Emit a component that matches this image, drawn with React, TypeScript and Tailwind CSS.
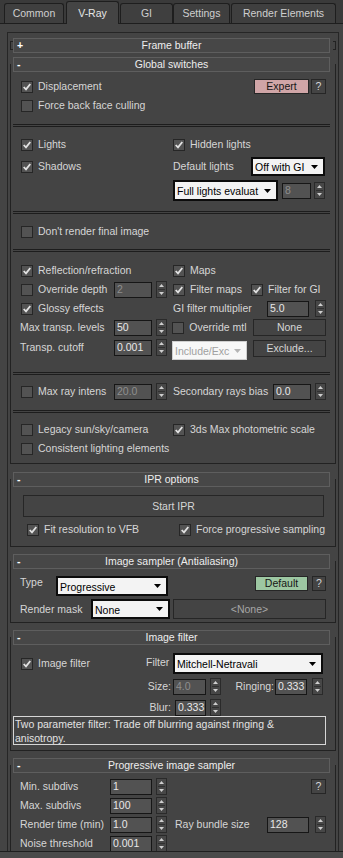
import React from "react";

type Kids = { className?: string; children?: React.ReactNode };

function Check({ on = false, label }: { on?: boolean; label: string }) {
  return (
    <div className="flex items-center whitespace-nowrap">
      <div className="w-[12px] h-[12px] shrink-0 border border-[#262626] bg-[#535353] flex items-center justify-center">
        {on && (
          <svg width="8" height="8" viewBox="0 0 8 8">
            <path d="M0.7 4 L3 6.4 L7.3 1" fill="none" stroke="#e2e2e2" strokeWidth="1.8" />
          </svg>
        )}
      </div>
      <span className="ml-[5px]">{label}</span>
    </div>
  );
}

function Spin({ className = "ml-[4px]" }: { className?: string }) {
  return (
    <div
      className={`w-[11px] h-[17px] shrink-0 border border-[#2a2a2a] bg-[#474747] flex flex-col items-center justify-center gap-[2px] ${className}`}
    >
      <svg width="5" height="3" viewBox="0 0 5 3">
        <path d="M0 3 L2.5 0 L5 3 Z" fill="#cfcfcf" />
      </svg>
      <div className="w-[7px] h-px bg-[#303030]" />
      <svg width="5" height="3" viewBox="0 0 5 3">
        <path d="M0 0 L2.5 3 L5 0 Z" fill="#cfcfcf" />
      </svg>
    </div>
  );
}

function Num({ v, className = "", dim = false }: { v: string; className?: string; dim?: boolean }) {
  return (
    <div
      className={`h-[16px] shrink-0 border border-[#161616] bg-[#525252] pl-[2px] flex items-center overflow-hidden whitespace-nowrap ${
        dim ? "text-[#8e8e8e]" : "text-[#e8e8e8]"
      } ${className}`}
    >
      {v}
    </div>
  );
}

function Drop({ v, className = "", off = false }: { v: string; className?: string; off?: boolean }) {
  return (
    <div
      className={`shrink-0 flex items-center overflow-hidden pl-[2px] pr-[5px] ${
        off ? "border border-[#cfcfcf] bg-[#f7f7f7] text-[#a0a0a0]" : "border-2 border-[#0c0c0c] bg-[#f3f3f3] text-black"
      } ${className}`}
    >
      <span className="flex-1 overflow-hidden whitespace-nowrap pt-[2px]">{v}</span>
      <svg width="7" height="4" viewBox="0 0 7 4" className="shrink-0 ml-[2px]">
        <path d="M0 0 H7 L3.5 4 Z" fill={off ? "#b4b4b4" : "#000"} />
      </svg>
    </div>
  );
}

function Btn({ children, className = "" }: Kids) {
  return (
    <div
      className={`shrink-0 flex items-center justify-center border border-[#262626] whitespace-nowrap ${className}`}
    >
      {children}
    </div>
  );
}

function Header({ title, sign, className = "ml-[2px] mr-[5px]" }: { title: string; sign: string; className?: string }) {
  return (
    <div
      className={`h-[15px] border border-[#5e5e5e] bg-[#474747] grid grid-cols-[20px_1fr_20px] items-center text-[#eeeeee] ${className}`}
    >
      <span className="pl-[3px] font-bold text-white leading-none">{sign}</span>
      <span className="text-center leading-none">{title}</span>
      <span />
    </div>
  );
}

function Rollout({ title, className = "", children }: { title: string; className?: string; children?: React.ReactNode }) {
  return (
    <div className={`flex flex-col border-x border-b border-[#222] ${className}`}>
      <div className="-mt-[7px]">
        <Header sign="-" title={title} />
      </div>
      {children}
    </div>
  );
}

function Sep() {
  return <div className="ml-[2px] mr-[5px] h-[3px] border-y border-[#1d1d1d]" />;
}

function Tab({ children, className = "", active = false }: Kids & { active?: boolean }) {
  return (
    <div
      className={`shrink-0 flex items-center justify-center border-t border-x border-[#1e1e1e] rounded-t-[3px] ${
        active ? "h-[23px] -mb-px bg-[#444444] text-[#e6e6e6]" : "h-[20px] bg-[#3f3f3f] text-[#cfcfcf]"
      } ${className}`}
    >
      {children}
    </div>
  );
}

export default function App() {
  return (
    <div className="w-[343px] h-[858px] overflow-hidden bg-[#444444] flex flex-col font-['Liberation_Sans',Arial,sans-serif] text-[10.5px] leading-[13px] text-[#d6d6d6]">
      {/* Tabs */}
      <div className="h-[24px] shrink-0 flex items-end border-b border-[#1e1e1e] bg-[#3a3a3a] pl-[4px]">
        <Tab className="w-[60px]">Common</Tab>
        <Tab active className="ml-[2px] w-[53px]">V-Ray</Tab>
        <Tab className="ml-[1px] w-[53px]">GI</Tab>
        <Tab className="w-[57px]">Settings</Tab>
        <Tab className="ml-[1px] w-[105px]">Render Elements</Tab>
      </div>

      <div className="flex-1 min-h-0 overflow-hidden pt-[8px] pl-[7px]">
        <div className="w-[332px] border-l border-t border-r border-[#262626] pt-[5px] px-[2px] pb-[40px]">
          {/* Frame buffer (collapsed) */}
          <div className="relative h-[15px]">
            <div className="absolute left-0 top-[3px] w-[3px] h-[9px] border-l border-y border-[#222]" />
            <div className="absolute right-0 top-[3px] w-[3px] h-[9px] border-r border-y border-[#222]" />
            <Header sign="+" title="Frame buffer" className="ml-[3px] mr-[6px]" />
          </div>

          {/* Global switches */}
          <Rollout title="Global switches" className="mt-[11px]">
            <div className="pl-[10px] pr-[9px] pt-[5px] pb-[9px]">
              <div className="h-[19px] flex items-center">
                <Check on label="Displacement" />
                <Btn className="ml-auto w-[55px] h-[15px] bg-[#d0a5a7] text-[#161616]">Expert</Btn>
                <Btn className="ml-[2px] w-[15px] h-[15px]">?</Btn>
              </div>
              <div className="h-[19px] flex items-center">
                <Check label="Force back face culling" />
              </div>
            </div>
            <Sep />
            <div className="pl-[10px] pr-[9px] pt-[8px] pb-[10px] flex">
              <div className="w-[152px] flex flex-col">
                <div className="h-[19px] flex items-center">
                  <Check on label="Lights" />
                </div>
                <div className="mt-[3px] h-[19px] flex items-center">
                  <Check on label="Shadows" />
                </div>
              </div>
              <div className="flex-1 flex flex-col">
                <div className="h-[19px] flex items-center">
                  <Check on label="Hidden lights" />
                </div>
                <div className="mt-[3px] h-[19px] flex items-center">
                  <span>Default lights</span>
                  <Drop v="Off with GI" className="ml-auto mr-[1px] w-[74px] h-[19px]" />
                </div>
                <div className="mt-[4px] h-[21px] flex items-center">
                  <Drop v="Full lights evaluat" className="w-[105px] h-[21px]" />
                  <Num v="8" dim className="ml-[4px] w-[29px]" />
                  <Spin className="ml-[3px]" />
                </div>
              </div>
            </div>
            <Sep />
            <div className="pl-[10px] pr-[9px] pt-[8px] pb-[8px]">
              <div className="h-[19px] flex items-center">
                <Check label="Don't render final image" />
              </div>
            </div>
            <Sep />
            <div className="pl-[10px] pr-[9px] pt-[9px] pb-[12px]">
              <div className="h-[19px] flex items-center">
                <div className="w-[152px]">
                  <Check on label="Reflection/refraction" />
                </div>
                <Check on label="Maps" />
              </div>
              <div className="h-[19px] flex items-center">
                <div className="w-[152px] flex items-center">
                  <div className="w-[93px]">
                    <Check label="Override depth" />
                  </div>
                  <Num v="2" dim className="w-[38px]" />
                  <Spin />
                </div>
                <div className="w-[78px]">
                  <Check on label="Filter maps" />
                </div>
                <Check on label="Filter for GI" />
              </div>
              <div className="h-[19px] flex items-center">
                <div className="w-[152px]">
                  <Check on label="Glossy effects" />
                </div>
                <span className="w-[94px]">GI filter multiplier</span>
                <Num v="5.0" className="w-[42px]" />
                <Spin className="ml-[6px]" />
              </div>
              <div className="h-[19px] flex items-center">
                <div className="w-[152px] flex items-center">
                  <span className="-ml-px w-[94px]">Max transp. levels</span>
                  <Num v="50" className="w-[38px]" />
                  <Spin />
                </div>
                <div className="w-[81px]">
                  <Check label="Override mtl" />
                </div>
                <Btn className="w-[73px] h-[17px]">None</Btn>
              </div>
              <div className="mt-[1px] h-[22px] flex items-start">
                <div className="mt-[1px] w-[152px] h-[17px] flex items-center">
                  <span className="-ml-px w-[94px]">Transp. cutoff</span>
                  <Num v="0.001" className="w-[38px]" />
                  <Spin />
                </div>
                <Drop v="Include/Exc" off className="mt-[3px] w-[75px] h-[19px]" />
                <Btn className="mt-[2px] ml-[6px] w-[73px] h-[17px]">Exclude...</Btn>
              </div>
            </div>
            <Sep />
            <div className="pl-[10px] pr-[9px] pt-[7px] pb-[9px]">
              <div className="h-[19px] flex items-center">
                <div className="w-[152px] flex items-center">
                  <div className="w-[93px]">
                    <Check label="Max ray intens" />
                  </div>
                  <Num v="20.0" dim className="w-[38px]" />
                  <Spin />
                </div>
                <span className="w-[100px] whitespace-nowrap">Secondary rays bias</span>
                <Num v="0.0" className="w-[38px]" />
                <Spin className="ml-[4px]" />
              </div>
            </div>
            <Sep />
            <div className="pl-[10px] pr-[9px] pt-[7px] pb-[5px]">
              <div className="h-[19px] flex items-center">
                <div className="w-[152px]">
                  <Check label="Legacy sun/sky/camera" />
                </div>
                <Check on label="3ds Max photometric scale" />
              </div>
              <div className="h-[19px] flex items-center">
                <Check label="Consistent lighting elements" />
              </div>
            </div>
          </Rollout>

          {/* IPR options */}
          <Rollout title="IPR options" className="mt-[15px]">
            <div className="pt-[8px] pb-[7px]">
              <Btn className="ml-[12px] w-[301px] h-[22px]">Start IPR</Btn>
              <div className="mt-[3px] h-[19px] flex items-center pl-[16px]">
                <div className="w-[152px]">
                  <Check on label="Fit resolution to VFB" />
                </div>
                <Check on label="Force progressive sampling" />
              </div>
            </div>
          </Rollout>

          {/* Image sampler */}
          <Rollout title="Image sampler (Antialiasing)" className="mt-[14px]">
            <div className="pl-[9px] pr-[9px] pt-[7px] pb-[3px]">
              <div className="h-[20px] flex items-start">
                <span className="w-[36px]">Type</span>
                <Drop v="Progressive" className="w-[112px] h-[20px]" />
                <Btn className="ml-auto w-[53px] h-[15px] bg-[#9dc7a2] text-[#161616]">Default</Btn>
                <Btn className="ml-[4px] w-[14px] h-[15px]">?</Btn>
              </div>
              <div className="mt-[3px] h-[20px] flex items-center">
                <span className="w-[71px]">Render mask</span>
                <Drop v="None" className="w-[79px] h-[20px]" />
                <Btn className="ml-[3px] flex-1 h-[20px] text-[#a6a6a6]">&lt;None&gt;</Btn>
              </div>
            </div>
          </Rollout>

          {/* Image filter */}
          <Rollout title="Image filter" className="mt-[14px]">
            <div className="pl-[10px] pr-[9px] pt-[8px]">
              <div className="h-[21px] flex items-center">
                <div className="w-[125px]">
                  <Check on label="Image filter" />
                </div>
                <span className="w-[27px] -mt-[3px]">Filter</span>
                <Drop v="Mitchell-Netravali" className="w-[150px] h-[21px]" />
              </div>
              <div className="mt-[4px] h-[17px] flex items-center">
                <span className="w-[150px] text-right">Size:</span>
                <Num v="4.0" dim className="ml-[2px] w-[33px]" />
                <Spin className="ml-[4px]" />
                <span className="w-[53px] text-right">Ringing:</span>
                <Num v="0.333" className="ml-[1px] w-[32px]" />
                <Spin className="ml-[5px]" />
              </div>
              <div className="mt-[4px] h-[17px] flex items-center">
                <span className="w-[150px] text-right">Blur:</span>
                <Num v="0.333" className="ml-[4px] w-[31px]" />
                <Spin className="ml-[4px]" />
              </div>
            </div>
            <div className="ml-[2px] w-[313px] h-[29px] border border-[#d6d6d6] px-[1px] leading-[14px] text-[#e2e2e2]">
              Two parameter filter: Trade off blurring against ringing &amp; anisotropy.
            </div>
            <div className="h-[5px]" />
          </Rollout>

          {/* Progressive image sampler */}
          <Rollout title="Progressive image sampler" className="mt-[14px]">
            <div className="pl-[9px] pr-[9px] pt-[4px] pb-[20px]">
              <div className="h-[19px] flex items-center">
                <span className="w-[90px]">Min. subdivs</span>
                <Num v="1" className="w-[42px]" />
                <Spin />
                <Btn className="ml-auto w-[15px] h-[15px]">?</Btn>
              </div>
              <div className="h-[19px] flex items-center">
                <span className="w-[90px]">Max. subdivs</span>
                <Num v="100" className="w-[42px]" />
                <Spin />
              </div>
              <div className="h-[19px] flex items-center">
                <span className="w-[90px] whitespace-nowrap">Render time (min)</span>
                <Num v="1.0" className="w-[42px]" />
                <Spin />
                <span className="ml-[8px] w-[92px]">Ray bundle size</span>
                <Num v="128" className="w-[42px]" />
                <Spin className="ml-[6px]" />
              </div>
              <div className="h-[19px] flex items-center">
                <span className="w-[90px]">Noise threshold</span>
                <Num v="0.001" className="w-[42px]" />
                <Spin />
              </div>
            </div>
          </Rollout>
        </div>
      </div>

      <div className="h-[7px] shrink-0 border-t border-[#1e1e1e] bg-[#4a4a4a]" />
    </div>
  );
}
